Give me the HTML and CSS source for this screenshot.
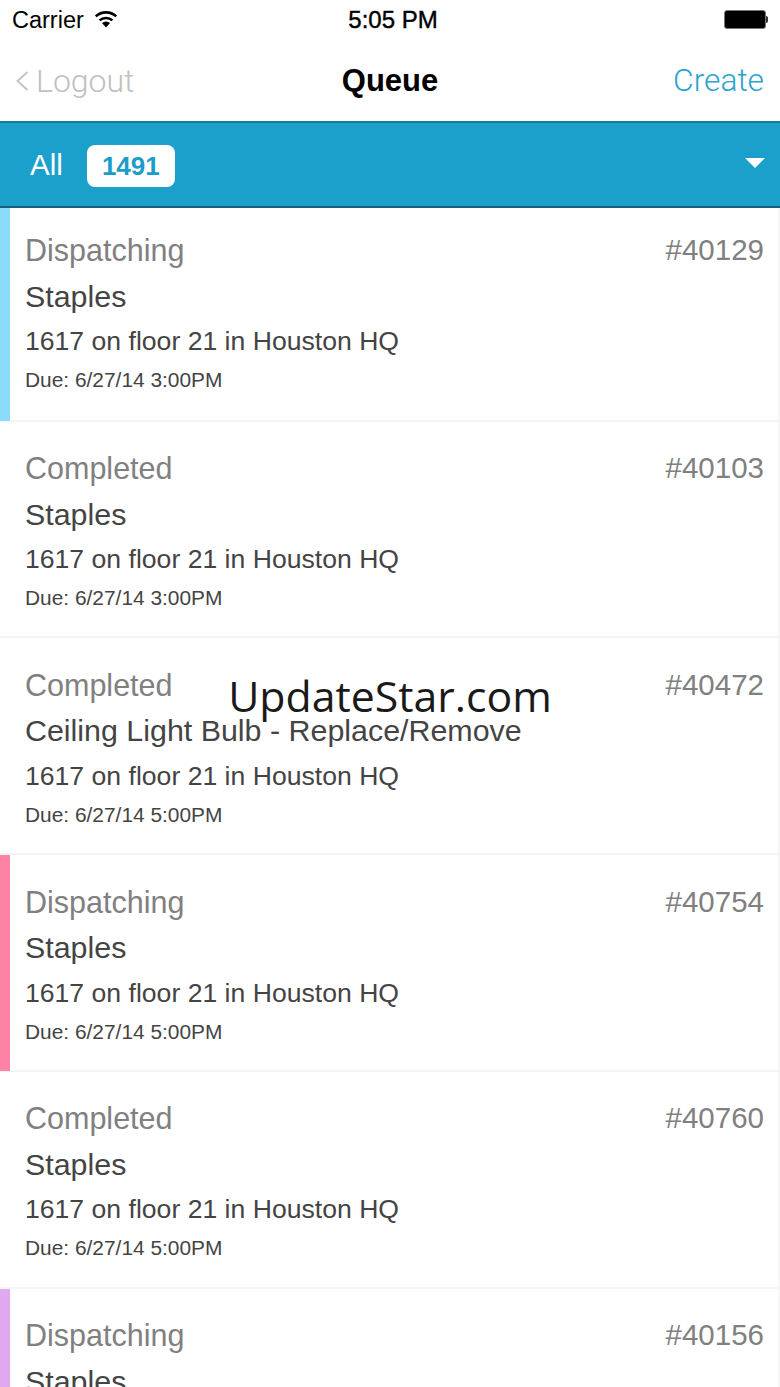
FILE: index.html
```html
<!DOCTYPE html>
<html lang="en">
<head>
    <meta charset="UTF-8">
    <meta name="viewport" content="width=device-width, initial-scale=1.0">
    <title>Queue</title>
    <link rel="stylesheet" href="styles.css">
</head>
<body>
    <div class="status-bar">
        <div class="status-left">
            <span>Carrier</span>
            <svg class="wifi" viewBox="0 0 24 18" width="24" height="18">
                <path d="M12 17.5 8 13a6 6 0 0 1 8 0z" fill="#000"/>
                <path d="M5.6 10.4a9.6 9.6 0 0 1 12.8 0" fill="none" stroke="#000" stroke-width="2.6"/>
                <path d="M1.8 6.4a15 15 0 0 1 20.4 0" fill="none" stroke="#000" stroke-width="2.6"/>
            </svg>
        </div>
        <div class="status-time">5:05 PM</div>
        <div class="battery"><div class="battery-fill"></div><div class="battery-tip"></div></div>
    </div>

    <div class="nav-bar">
        <div class="nav-back">
            <svg viewBox="0 0 14 22" width="14" height="22">
                <path d="M12.5 2 2.5 11l10 9" fill="none" stroke="#c4c4c4" stroke-width="2"/>
            </svg>
            <span>Logout</span>
        </div>
        <div class="nav-title">Queue</div>
        <div class="nav-create">Create</div>
    </div>

    <div class="filter-bar">
        <span class="filter-name">All</span>
        <span class="filter-count">1491</span>
        <span class="filter-arrow"></span>
    </div>

    <div class="queue">
        <div class="ticket first">
            <div class="flag flag-blue"></div>
            <div class="ticket-top"><span>Dispatching</span><span class="ticket-id">#40129</span></div>
            <div class="ticket-title">Staples</div>
            <div class="ticket-place">1617 on floor 21 in Houston HQ</div>
            <div class="ticket-due">Due: 6/27/14 3:00PM</div>
        </div>
        <div class="ticket">
            <div class="ticket-top"><span>Completed</span><span class="ticket-id">#40103</span></div>
            <div class="ticket-title">Staples</div>
            <div class="ticket-place">1617 on floor 21 in Houston HQ</div>
            <div class="ticket-due">Due: 6/27/14 3:00PM</div>
        </div>
        <div class="ticket">
            <div class="ticket-top"><span>Completed</span><span class="ticket-id">#40472</span></div>
            <div class="ticket-title">Ceiling Light Bulb - Replace/Remove</div>
            <div class="ticket-place">1617 on floor 21 in Houston HQ</div>
            <div class="ticket-due">Due: 6/27/14 5:00PM</div>
        </div>
        <div class="ticket">
            <div class="flag flag-pink"></div>
            <div class="ticket-top"><span>Dispatching</span><span class="ticket-id">#40754</span></div>
            <div class="ticket-title">Staples</div>
            <div class="ticket-place">1617 on floor 21 in Houston HQ</div>
            <div class="ticket-due">Due: 6/27/14 5:00PM</div>
        </div>
        <div class="ticket">
            <div class="ticket-top"><span>Completed</span><span class="ticket-id">#40760</span></div>
            <div class="ticket-title">Staples</div>
            <div class="ticket-place">1617 on floor 21 in Houston HQ</div>
            <div class="ticket-due">Due: 6/27/14 5:00PM</div>
        </div>
        <div class="ticket">
            <div class="flag flag-purple"></div>
            <div class="ticket-top"><span>Dispatching</span><span class="ticket-id">#40156</span></div>
            <div class="ticket-title">Staples</div>
        </div>
    </div>

    <div class="watermark">UpdateStar.com</div>
</body>
</html>
```

FILE: styles.css
```css
* {
    margin: 0;
    padding: 0;
    box-sizing: border-box;
}

html, body {
    height: 100%;
    overflow: hidden;
}

body {
    font-family: 'Liberation Sans', Arial, sans-serif;
    background: #fff;
    color: #000;
    position: relative;
    display: flex;
    flex-direction: column;
}

.status-bar {
    flex: none;
    height: 40px;
    padding: 0 12px 0 12px;
    display: flex;
    align-items: center;
    justify-content: space-between;
    font-size: 23.5px;
    position: relative;
}

.status-left {
    display: flex;
    align-items: center;
    gap: 10px;
}

.status-left .wifi {
    margin-top: -3px;
}

.status-time {
    position: absolute;
    left: 6px;
    right: 0;
    text-align: center;
    font-size: 24px;
    -webkit-text-stroke: 0.4px #000;
}

.battery {
    display: flex;
    align-items: center;
    margin-top: -2px;
}

.battery-fill {
    width: 42px;
    height: 19px;
    background: #000;
    border: 1px solid #777;
    border-radius: 3px;
}

.battery-tip {
    width: 2px;
    height: 7px;
    background: #333;
    border-radius: 0 2px 2px 0;
}

.nav-bar {
    flex: none;
    height: 81px;
    padding: 0 16px 0 15px;
    display: flex;
    align-items: center;
    justify-content: space-between;
    position: relative;
}

.nav-back {
    display: flex;
    align-items: center;
    gap: 7px;
    font-family: 'Roboto', sans-serif;
    font-weight: 300;
    font-size: 32px;
    line-height: 78px;
    color: #c0c0c0;
}

.nav-title {
    position: absolute;
    left: 0;
    right: 0;
    text-align: center;
    font-size: 31px;
    font-weight: 700;
    line-height: 78px;
}

.nav-create {
    font-family: 'Roboto', sans-serif;
    font-weight: 300;
    font-size: 31.7px;
    color: #2ba3cc;
}

.filter-bar {
    flex: none;
    height: 87px;
    padding-left: 30px;
    padding-right: 15px;
    display: flex;
    align-items: center;
    background: #1ba0cc;
    border-top: 2px solid #17799b;
    border-bottom: 2px solid #14607c;
    color: #fff;
}

.filter-name {
    font-size: 29.5px;
    margin-right: 24px;
}

.filter-count {
    width: 88px;
    height: 42px;
    margin-top: 2px;
    line-height: 43px;
    text-align: center;
    background: #fff;
    color: #1b9cc9;
    font-size: 26px;
    font-weight: 700;
    border-radius: 8px;
}

.filter-arrow {
    margin-left: auto;
    margin-top: -3px;
    width: 0;
    height: 0;
    border-left: 10px solid transparent;
    border-right: 10px solid transparent;
    border-top: 10px solid #fff;
}

.queue {
    flex: 1;
    min-height: 0;
    overflow: hidden;
}

.ticket {
    position: relative;
    height: 216.75px;
    padding: 26.5px 14px 0 25px;
    border-bottom: 2px solid #f4f4f4;
    border-right: 2px solid #f6f6f6;
}

.ticket.first {
    height: 213.5px;
    padding-top: 22px;
}

.flag {
    position: absolute;
    left: 0;
    top: 0;
    bottom: -1px;
    width: 10px;
}

.flag-blue { background: #8adcfb; }
.flag-pink { background: #fe82a6; }
.flag-purple { background: #e0a8ee; }

.ticket-top {
    display: flex;
    justify-content: space-between;
    font-size: 30.5px;
    line-height: 40px;
    color: #808080;
}

.ticket-id {
    font-size: 29.5px;
}

.ticket-title {
    margin-top: 5.5px;
    font-size: 30.4px;
    line-height: 40px;
    color: #444;
}

.ticket-place {
    margin-top: 5.5px;
    font-size: 26.6px;
    line-height: 40px;
    color: #444;
}

.ticket-due {
    margin-top: 3px;
    font-size: 20.9px;
    line-height: 32px;
    color: #444;
}

.watermark {
    position: absolute;
    left: 0;
    right: 0;
    top: 666px;
    text-align: center;
    font-family: 'Open Sans', sans-serif;
    font-size: 42.8px;
    line-height: 60px;
    color: #1a1a1a;
}
```
